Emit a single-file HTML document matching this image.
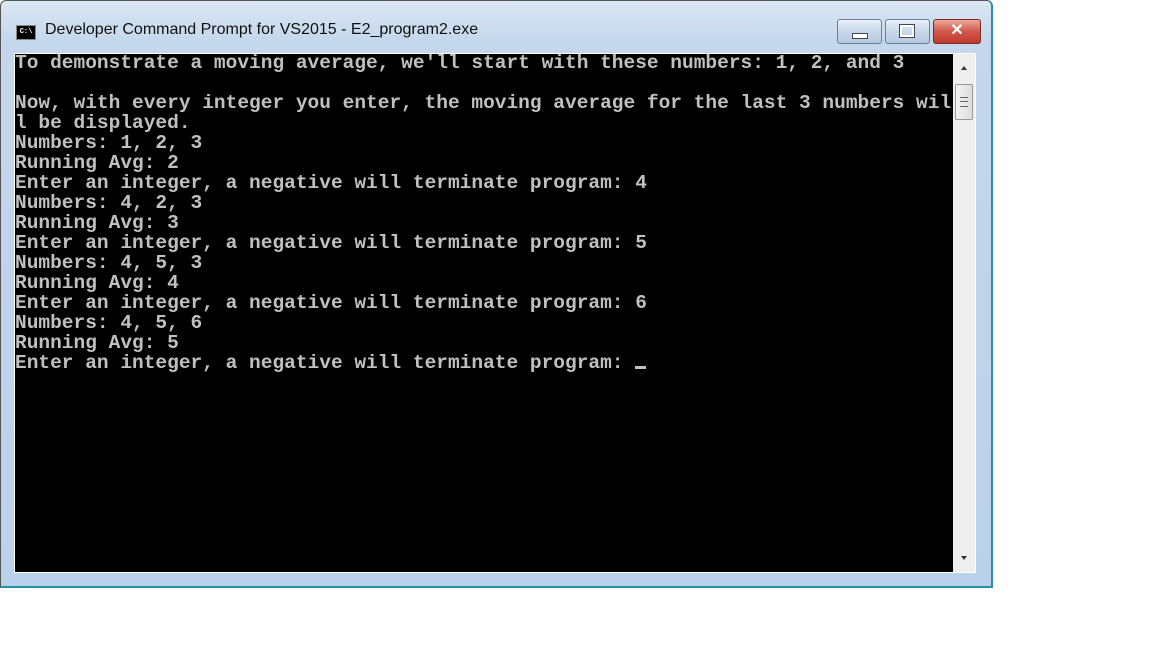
<!DOCTYPE html>
<html><head><style>
body{margin:0;width:1152px;height:648px;background:#fff;position:relative;overflow:hidden;font-family:"Liberation Sans",sans-serif}
.win{position:absolute;left:0;top:0;width:990px;height:585px;border:1px solid #555;border-right:2px solid #2a8fa8;border-bottom:2px solid #2a8fa8;background:linear-gradient(#dbe7f4,#c4d7ec 40px,#b9d1ea);border-radius:6px 6px 0 0}
.title{position:absolute;left:44px;top:20px;font-size:16px;color:#111}
.ico{position:absolute;left:15px;top:24px;width:18px;height:13px;background:#000;border:1px solid #888;color:#fff;font:bold 7px "Liberation Mono",monospace;line-height:13px;text-align:center}
.btn{position:absolute;top:18px;height:23px;border:1px solid #6b7f99;border-radius:3px;background:linear-gradient(#e9f0f8,#c9d8ea 50%,#b5c9e0)}
.con{position:absolute;left:14px;top:53px;width:939px;height:518px;background:#000;border:1px solid #fff}
.sb{position:absolute;left:953px;top:53px;width:22px;height:518px;background:#eeeeee;border-right:1px solid #fff;border-top:1px solid #fff;border-bottom:1px solid #fff}
pre{margin:0;position:absolute;left:15px;top:53px;color:#c0c0c0;font:bold 19.5px/20px "Liberation Mono",monospace;letter-spacing:0}
</style></head><body>
<div class="win">
<div class="ico">C:\</div>
<div class="title">Developer Command Prompt for VS2015 - E2_program2.exe</div>
<div class="btn" style="left:836px;width:43px"><div style="position:absolute;left:14px;top:13px;width:14px;height:4px;background:#fff;border:1px solid #445"></div></div>
<div class="btn" style="left:884px;width:43px"><div style="position:absolute;left:14px;top:5px;width:10px;height:8px;border:2px solid #fff;outline:1px solid #445"></div></div>
<div class="btn" style="left:932px;width:46px;border-color:#7a2b24;background:linear-gradient(#e9a99c,#d0594a 50%,#c0392b);color:#fff;font:bold 16px sans-serif;text-align:center;line-height:22px">✕</div>
</div>
<div class="con"></div>
<div class="sb">
<div style="position:absolute;left:8px;top:12px;border:3px solid transparent;border-bottom:4px solid #333;border-top:0"></div>
<div style="position:absolute;left:2px;top:30px;width:16px;height:34px;background:linear-gradient(90deg,#f3f3f3,#dcdcdc);border:1px solid #999;border-radius:2px"><div style="position:absolute;left:4px;top:12px;width:8px;height:8px;border-top:1px solid #666;border-bottom:1px solid #666"></div><div style="position:absolute;left:4px;top:16px;width:8px;height:1px;background:#666"></div></div>
<div style="position:absolute;left:8px;top:502px;border:3px solid transparent;border-top:4px solid #333;border-bottom:0"></div>
</div>
<pre>To demonstrate a moving average, we'll start with these numbers: 1, 2, and 3

Now, with every integer you enter, the moving average for the last 3 numbers wil
l be displayed.
Numbers: 1, 2, 3
Running Avg: 2
Enter an integer, a negative will terminate program: 4
Numbers: 4, 2, 3
Running Avg: 3
Enter an integer, a negative will terminate program: 5
Numbers: 4, 5, 3
Running Avg: 4
Enter an integer, a negative will terminate program: 6
Numbers: 4, 5, 6
Running Avg: 5
Enter an integer, a negative will terminate program: <span style="display:inline-block;width:11px;height:3px;background:#c0c0c0;vertical-align:-1px"></span></pre>
</body></html>
